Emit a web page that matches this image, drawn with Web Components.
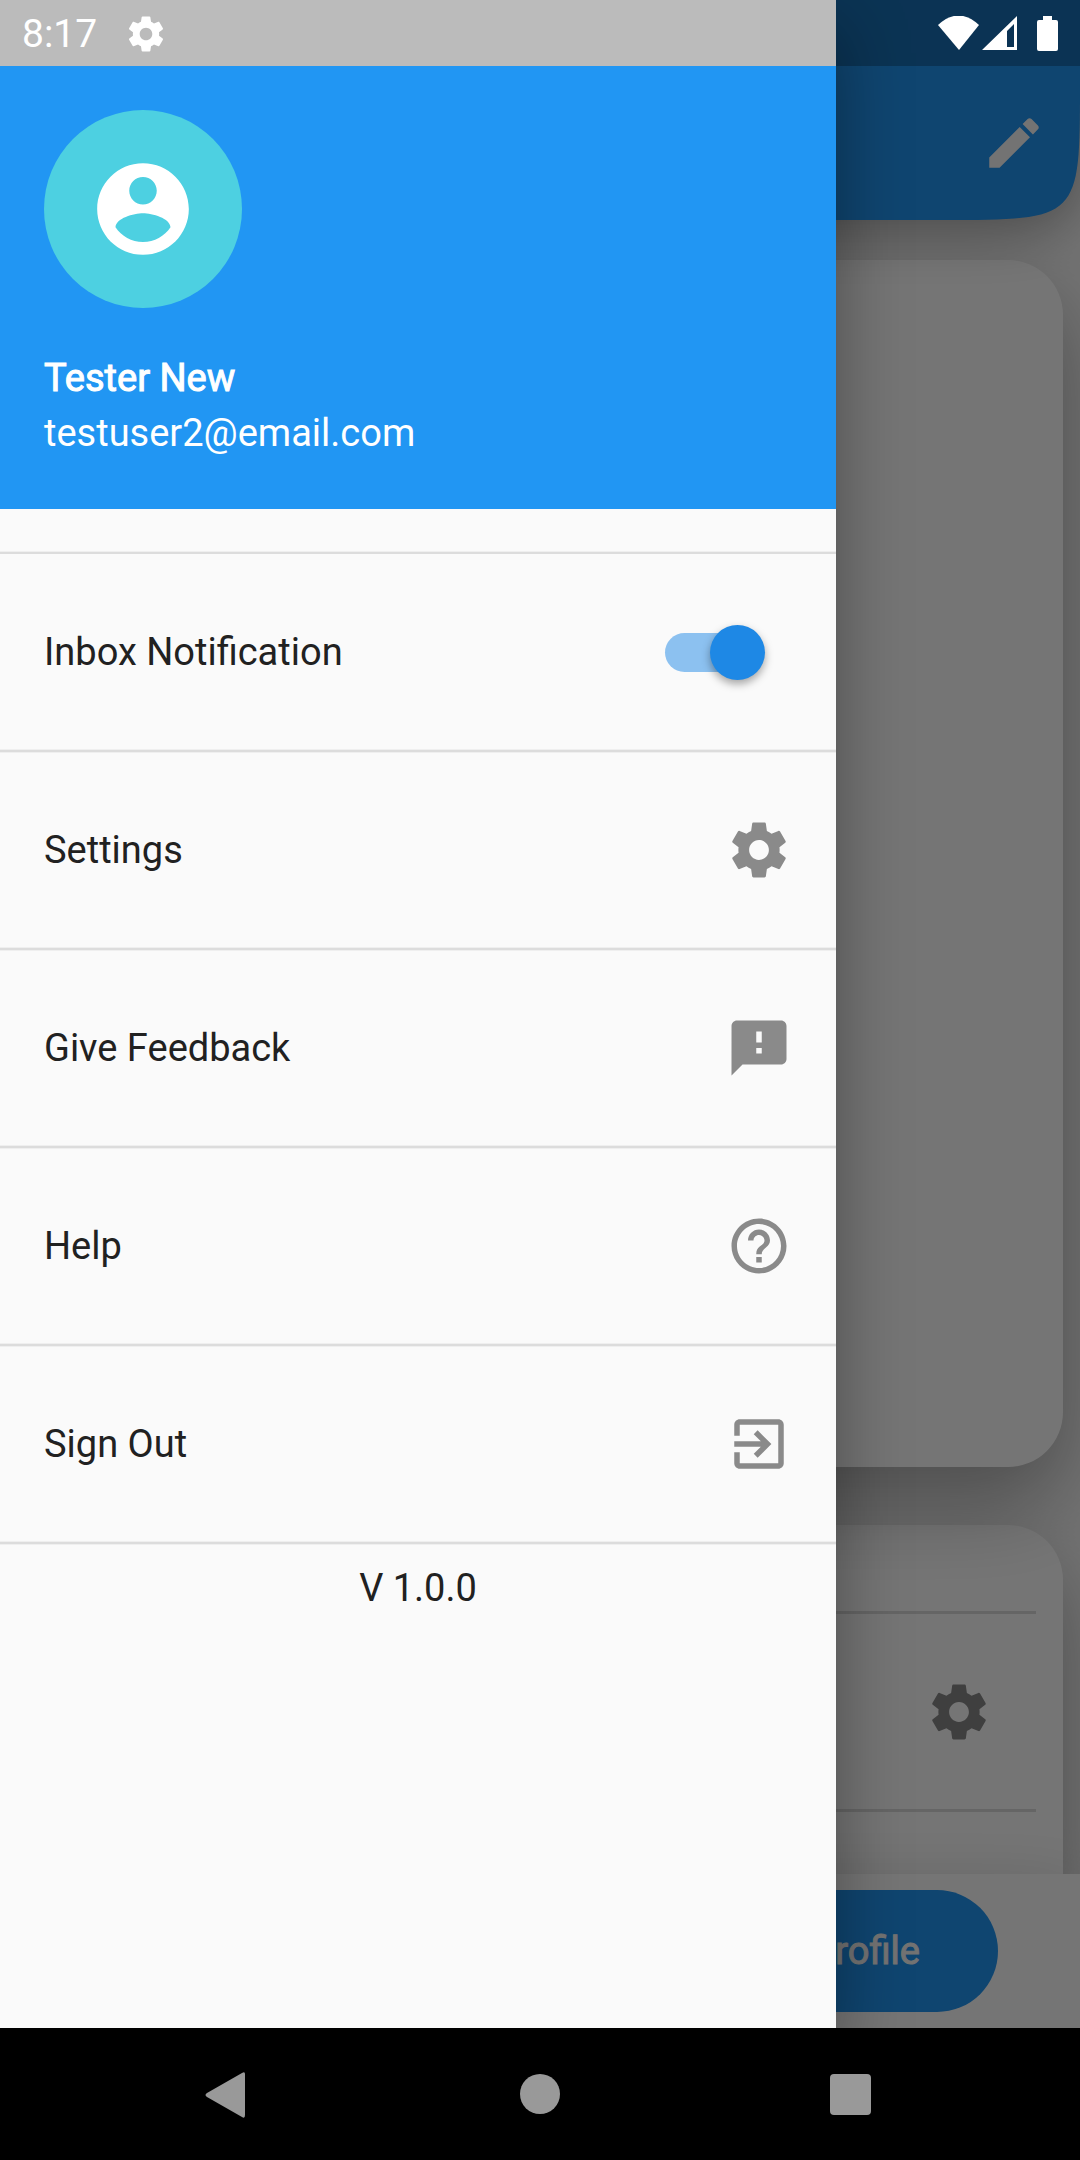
<!DOCTYPE html>
<html lang="en">
<head>
<meta charset="utf-8">
<meta name="viewport" content="width=device-width, initial-scale=1">
<title>Profile</title>
<style>
  body { margin: 0; font-family: Roboto, "Noto Sans", sans-serif; font-size: 38px; line-height: 44px; color: #212121; background: #000; }
</style>
</head>
<body>
<phone-screen>
  <status-bar slot="status"></status-bar>
  <profile-page slot="page"></profile-page>
  <nav-drawer slot="drawer">
    <account-header slot="header" name="Tester New" email="testuser2@email.com"></account-header>
    <drawer-switch label="Inbox Notification"></drawer-switch>
    <drawer-item icon="settings">Settings</drawer-item>
    <drawer-item icon="feedback">Give Feedback</drawer-item>
    <drawer-item icon="help">Help</drawer-item>
    <drawer-item icon="exit">Sign Out</drawer-item>
    <span slot="version">V 1.0.0</span>
  </nav-drawer>
  <system-nav slot="nav"></system-nav>
</phone-screen>

<script>
const ICONS = {
  settings: '<path d="M19.43 12.98c.04-.32.07-.64.07-.98s-.03-.66-.07-.98l2.11-1.65c.19-.15.24-.42.12-.64l-2-3.46c-.12-.22-.39-.3-.61-.22l-2.49 1c-.52-.4-1.08-.73-1.69-.98l-.38-2.65C14.46 2.18 14.25 2 14 2h-4c-.25 0-.46.18-.49.42l-.38 2.65c-.61.25-1.17.59-1.69.98l-2.49-1c-.23-.09-.49 0-.61.22l-2 3.46c-.13.22-.07.49.12.64l2.11 1.65c-.04.32-.07.65-.07.98s.03.66.07.98l-2.11 1.65c-.19.15-.24.42-.12.64l2 3.46c.12.22.39.3.61.22l2.49-1c.52.4 1.08.73 1.69.98l.38 2.65c.03.24.24.42.49.42h4c.25 0 .46-.18.49-.42l.38-2.65c.61-.25 1.17-.59 1.69-.98l2.49 1c.23.09.49 0 .61-.22l2-3.46c.12-.22.07-.49-.12-.64l-2.11-1.65zM12 15.600c-1.980 0-3.600-1.620-3.600-3.600s1.620-3.600 3.600-3.600 3.600 1.620 3.600 3.600-1.620 3.600-3.600 3.600z"/>',
  feedback: '<path d="M20 2H4c-1.1 0-1.99.9-1.99 2L2 22l4-4h14c1.1 0 2-.9 2-2V4c0-1.100-.9-2-2-2zm-7 12h-2v-2h2v2zm0-4h-2V6h2v4z"/>',
  help: '<path d="M11 18h2v-2h-2v2zm1-16C6.480 2 2 6.480 2 12s4.480 10 10 10 10-4.480 10-10S17.520 2 12 2zm0 18c-4.410 0-8-3.590-8-8s3.590-8 8-8 8 3.590 8 8-3.590 8-8 8zm0-14c-2.210 0-4 1.790-4 4h2c0-1.100.9-2 2-2s2 .9 2 2c0 2-3 1.750-3 5h2c0-2.250 3-2.500 3-5 0-2.210-1.790-4-4-4z"/>',
  exit: '<path d="M10.090 15.590L11.500 17l5-5-5-5-1.410 1.410L12.670 11H3v2h9.670l-2.580 2.590zM19 3H5c-1.110 0-2 .9-2 2v4h2V5h14v14H5v-4H3v4c0 1.100.89 2 2 2h14c1.100 0 2-.9 2-2V5c0-1.100-.9-2-2-2z"/>',
  account: '<path d="M12 2C6.480 2 2 6.480 2 12s4.480 10 10 10 10-4.480 10-10S17.520 2 12 2zm0 3c1.660 0 3 1.340 3 3s-1.340 3-3 3-3-1.340-3-3 1.340-3 3-3zm0 14.200c-2.500 0-4.710-1.280-6-3.220.03-1.990 4-3.080 6-3.080 1.990 0 5.970 1.090 6 3.080-1.290 1.940-3.500 3.220-6 3.220z"/>',
  edit: '<path d="M3 17.250V21h3.750L17.810 9.940l-3.750-3.750L3 17.250zM20.710 7.040c.39-.39.39-1.020 0-1.410l-2.340-2.340c-.39-.39-1.020-.39-1.410 0l-1.830 1.830 3.750 3.750 1.830-1.830z"/>'
};

class BaseElement extends HTMLElement {
  connectedCallback() {
    if (this.shadowRoot) return;
    this.attachShadow({ mode: 'open' }).innerHTML =
      '<style>*{box-sizing:border-box}button{font:inherit;color:inherit;border:0;margin:0;padding:0;background:none;text-align:left}</style>' + this.view();
  }
}

customElements.define('md-icon', class extends BaseElement {
  view() {
    return `<style>:host{display:block;flex:none;width:66px;height:66px}svg{display:block;width:100%;height:100%;fill:currentColor}</style>
      <svg viewBox="0 0 24 24" aria-hidden="true">${ICONS[this.getAttribute('name')]}</svg>`;
  }
});

customElements.define('phone-screen', class extends BaseElement {
  view() {
    return `<style>
      :host{display:flex;flex-direction:column;min-height:100vh}
      main{position:relative;flex:1;display:flex;flex-direction:column;overflow:hidden}
      .scrim{position:absolute;inset:0;background:rgba(0,0,0,.54)}
      slot[name=drawer]::slotted(*){position:absolute;top:0;bottom:0;left:0}
      slot[name=status]::slotted(*){position:absolute;top:0;left:0;right:0}
    </style>
    <main><slot name="page"></slot><div class="scrim"></div><slot name="drawer"></slot><slot name="status"></slot></main>
    <slot name="nav"></slot>`;
  }
});

customElements.define('status-bar', class extends BaseElement {
  view() {
    return `<style>
      :host{display:flex;box-sizing:border-box;align-items:center;justify-content:space-between;height:66px;padding:2px 22px 0;color:#fff;background:rgba(0,0,0,.25);font-size:39px}
      div{display:flex;align-items:center}
      .left{gap:28px}
      md-icon{width:42px;height:42px}
      svg{display:block;fill:#fff}
      .signal{margin-left:1px}
      .battery{margin-left:19px}
    </style>
    <div class="left"><span>8:17</span><md-icon name="settings"></md-icon></div>
    <div>
      <svg width="44" height="36" viewBox="0 0 44 36"><path d="M1 9Q21.500-10 42 9L22 34z"/></svg>
      <svg class="signal" width="36" height="36" viewBox="0 0 36 36"><path fill-rule="evenodd" d="M35 0V34H0zM32 8L25 15V31H32z"/></svg>
      <svg class="battery" width="21" height="36" viewBox="0 0 21 36"><path d="M6 0h9v4h4q2 0 2 2v27q0 2-2 2H2q-2 0-2-2V6q0-2 2-2h4z"/></svg>
    </div>`;
  }
});

customElements.define('profile-page', class extends BaseElement {
  view() {
    return `<style>
      :host{flex:1;display:flex;flex-direction:column;background:#fafafa;isolation:isolate;--lift:0 36px 82px rgba(0,0,0,.32)}
      header{position:relative;z-index:2;display:flex;height:220px;filter:drop-shadow(0 14px 26px rgba(0,0,0,.32))}
      header .bar{flex:1;background:#2196f3}
      header svg{display:block}
      header button{position:absolute;right:33px;top:110px;color:#fafafa}
      .body{flex:1;display:flex;flex-direction:column;gap:58px;padding:40px 17px 0}
      section{background:#fff;border-radius:55px;box-shadow:var(--lift)}
      .photo{position:relative;z-index:1;height:1207px}
      .details{flex:1;padding:86px 27px 0;border-radius:55px 55px 0 0}
      .row{height:198px;border-top:3px solid #dcdcdc;display:flex;align-items:center;justify-content:flex-end;padding-right:44px;color:#8a8a8a}
      .row.next{height:60px}
      footer{position:relative;z-index:1;background:#fff;padding:16px 82px;box-shadow:var(--lift)}
      footer button{display:block;width:100%;height:122px;border-radius:61px;background:#2196f3;color:#fafafa;text-align:right;padding-right:78px;-webkit-text-stroke:1px currentColor}
    </style>
    <header><div class="bar"></div><svg width="138" height="220" viewBox="0 0 138 220"><path fill="#2196f3" d="M0 0H138V82C138 220 138 220 0 220z"/></svg>
      <button aria-label="Edit"><md-icon name="edit"></md-icon></button></header>
    <div class="body">
      <section class="photo"></section>
      <section class="details"><div class="row"><md-icon name="settings"></md-icon></div><div class="row next"></div></section>
    </div>
    <footer><button>Profile</button></footer>`;
  }
});

customElements.define('nav-drawer', class extends BaseElement {
  view() {
    return `<style>
      :host{display:flex;flex-direction:column;width:836px;max-width:85%;box-sizing:border-box;padding-top:66px;background:#fafafa;box-shadow:0 30px 66px rgba(0,0,0,.36)}
      nav{margin-top:43px;border-top:2px solid #dcdcdc;box-shadow:0 -1px #efefef}
      p{margin:22px 0 0;text-align:center}
    </style>
    <slot name="header"></slot><nav><slot></slot></nav><p><slot name="version"></slot></p>`;
  }
});

customElements.define('account-header', class extends BaseElement {
  view() {
    return `<style>
      :host{display:block;background:#2196f3;color:#fff;padding:44px 44px 48px}
      .avatar{display:flex;align-items:center;justify-content:center;width:198px;height:198px;border-radius:50%;background:#4dd0e1}
      md-icon{width:110px;height:110px}
      .name,.email{line-height:55px}
      .name{margin-top:43px;-webkit-text-stroke:1px currentColor}
    </style>
    <div class="avatar"><md-icon name="account"></md-icon></div>
    <div class="name">${this.getAttribute('name')}</div>
    <div class="email">${this.getAttribute('email')}</div>`;
  }
});

const LINE = 'display:block;border-bottom:2px solid #dcdcdc;box-shadow:inset 0 -1px #efefef,0 1px #efefef';
const ROW = 'display:flex;align-items:center;justify-content:space-between;width:100%;height:196px;padding:0 44px';

customElements.define('drawer-item', class extends BaseElement {
  view() {
    return `<style>
      :host{${LINE}}
      button{${ROW}}
      md-icon{color:#8a8a8a}
    </style>
    <button><slot></slot><md-icon name="${this.getAttribute('icon')}"></md-icon></button>`;
  }
});

customElements.define('drawer-switch', class extends BaseElement {
  view() {
    return `<style>
      :host{${LINE}}
      div{${ROW};padding-right:71px}
      input{appearance:none;display:flex;align-items:center;margin:0;width:100px;height:55px;position:relative}
      input::before{content:"";width:91px;height:39px;border-radius:20px;background:#8cc1f0}
      input::after{content:"";position:absolute;right:0;top:0;width:55px;height:55px;border-radius:50%;background:#1e88e5;box-shadow:0 4px 8px rgba(0,0,0,.35)}
    </style>
    <div><label for="toggle">${this.getAttribute('label')}</label><input type="checkbox" id="toggle" role="switch" checked></div>`;
  }
});

customElements.define('system-nav', class extends BaseElement {
  view() {
    return `<style>
      :host{display:flex;align-items:center;justify-content:space-between;height:132px;padding:0 200px;background:#000}
      svg{display:block;fill:#999}
    </style>
    <button aria-label="Back"><svg width="56" height="56" viewBox="0 0 56 56"><path d="M42 7Q45 5 45 8V49Q45 53 42 51L7 31Q4 29 7 27z"/></svg></button>
    <button aria-label="Home"><svg width="56" height="56" viewBox="0 0 56 56"><circle cx="28" cy="28" r="20"/></svg></button>
    <button aria-label="Recent apps"><svg width="56" height="56" viewBox="0 0 56 56"><rect x="6" y="8" width="41" height="41" rx="4"/></svg></button>`;
  }
});
</script>
</body>
</html>
